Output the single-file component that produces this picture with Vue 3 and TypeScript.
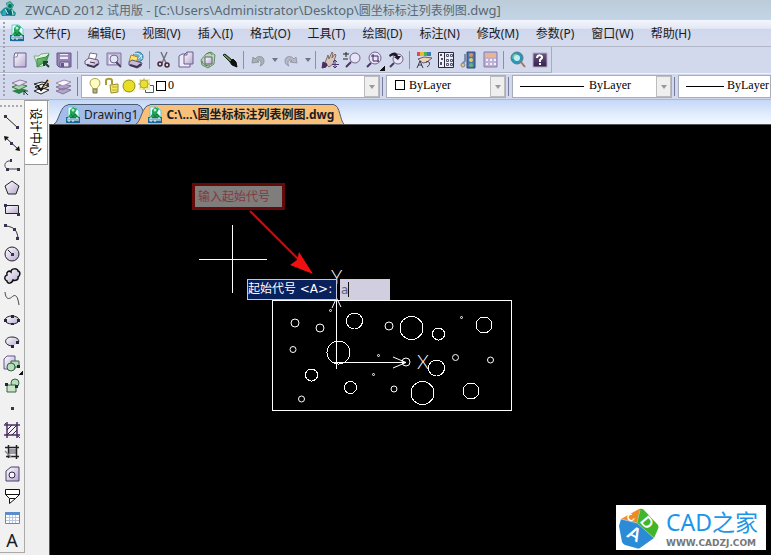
<script setup lang="ts">
import { ref } from 'vue'

interface Tool {
  icon: string
  label: string
  menu?: boolean
  flyout?: boolean
}

interface Hole {
  x: number
  y: number
  r: number
}

const menus: string[] = [
  '文件(F)', '编辑(E)', '视图(V)', '插入(I)', '格式(O)', '工具(T)',
  '绘图(D)', '标注(N)', '修改(M)', '参数(P)', '窗口(W)', '帮助(H)',
]

const toolGroups: Tool[][] = [
  [
    { icon: 'new', label: '新建' },
    { icon: 'open', label: '打开' },
    { icon: 'save', label: '保存' },
  ],
  [
    { icon: 'print', label: '打印' },
    { icon: 'preview', label: '打印预览' },
    { icon: 'publish', label: '发布' },
  ],
  [
    { icon: 'cut', label: '剪切' },
    { icon: 'copy', label: '复制' },
    { icon: 'paste', label: '粘贴' },
    { icon: 'match', label: '特性匹配' },
  ],
  [
    { icon: 'undo', label: '放弃', menu: true },
    { icon: 'redo', label: '重做', menu: true },
  ],
  [
    { icon: 'pan', label: '实时平移' },
    { icon: 'zoomrt', label: '实时缩放' },
    { icon: 'zoomwin', label: '窗口缩放', flyout: true },
    { icon: 'zoomprev', label: '缩放上一个' },
  ],
  [
    { icon: 'props', label: '特性' },
    { icon: 'center', label: '设计中心' },
    { icon: 'palette', label: '工具选项板' },
    { icon: 'calc', label: '计算器' },
  ],
  [
    { icon: 'find', label: '查找' },
    { icon: 'help', label: '帮助' },
  ],
]

const layerTools: Tool[] = [
  { icon: 'layercur', label: '将对象的图层置为当前' },
  { icon: 'layeredit', label: '图层特性管理器' },
  { icon: 'layers', label: '上一个图层' },
]

const drawTools: Tool[] = [
  { icon: 'line', label: '直线' },
  { icon: 'xline', label: '构造线' },
  { icon: 'pline', label: '多段线' },
  { icon: 'polygon', label: '正多边形' },
  { icon: 'rect', label: '矩形' },
  { icon: 'arc', label: '圆弧' },
  { icon: 'circle', label: '圆' },
  { icon: 'cloud', label: '修订云线' },
  { icon: 'spline', label: '样条曲线' },
  { icon: 'ellipse', label: '椭圆' },
  { icon: 'earc', label: '椭圆弧' },
  { icon: 'insert', label: '插入块', flyout: true },
  { icon: 'block', label: '创建块' },
  { icon: 'point', label: '点' },
  { icon: 'hatch', label: '图案填充' },
  { icon: 'boundary', label: '边界' },
  { icon: 'region', label: '面域' },
  { icon: 'wipeout', label: '区域覆盖' },
  { icon: 'table', label: '表格' },
  { icon: 'text', label: '多行文字' },
]

const holes: Hole[] = [
  { x: 295, y: 323, r: 4 }, { x: 320, y: 328, r: 4 }, { x: 330.5, y: 310.5, r: 1 },
  { x: 354.5, y: 321, r: 8 }, { x: 389, y: 326, r: 4 }, { x: 411.5, y: 328, r: 11.5 },
  { x: 438.5, y: 334, r: 6 }, { x: 461.5, y: 317.5, r: 1 }, { x: 484, y: 325, r: 8 },
  { x: 293, y: 349.5, r: 3 }, { x: 338.5, y: 352.5, r: 11.5 }, { x: 378.5, y: 355.5, r: 1 },
  { x: 406, y: 362, r: 4 }, { x: 436.5, y: 368, r: 8 }, { x: 455.5, y: 357.5, r: 3 },
  { x: 490.5, y: 360, r: 3 }, { x: 311.5, y: 375, r: 6 }, { x: 373.5, y: 374.5, r: 1 },
  { x: 350.5, y: 387.5, r: 6 }, { x: 394, y: 389, r: 3 }, { x: 422.5, y: 393, r: 11.5 },
  { x: 471, y: 391, r: 8 }, { x: 301.5, y: 399, r: 3 },
]

const startCode = ref('a')
</script>

<template>
  <div class="app">
    <svg class="sprite" width="0" height="0" aria-hidden="true">
      <defs>
        <linearGradient id="g-lilac" x1="0" y1="0" x2="1" y2="1">
          <stop offset="0" stop-color="#ffffff" />
          <stop offset="1" stop-color="#b6a8cf" />
        </linearGradient>
        <linearGradient id="g-green" x1="0" y1="0" x2="1" y2="1">
          <stop offset="0" stop-color="#8fd08a" />
          <stop offset="1" stop-color="#2e8a45" />
        </linearGradient>
        <linearGradient id="g-purple" x1="0" y1="0" x2="0" y2="1">
          <stop offset="0" stop-color="#6a5784" />
          <stop offset="1" stop-color="#33224a" />
        </linearGradient>
      </defs>
      <symbol id="i-logo" viewBox="0 0 18 18">
        <path d="M6 2l4-2 4 4-2 4 4 4-1 3H2l-2-4 4-4 3-1z" fill="#1c8f86" />
        <path d="M7 2l3-1 3 4-2 3-4-1z" fill="#49c58c" />
        <circle cx="10" cy="5" r="2" fill="#126a6d" />
        <path d="M3 10l4-1 3 6-8-1zM11 9l4 4-3 2z" fill="#2da7c4" />
        <path d="M7 7l2 3 2-2 2 6H6z" fill="#0f6377" />
        <path d="M5 8l3 5M12 9l1 5" stroke="#bdf0d8" />
      </symbol>
      <symbol id="i-dwg" viewBox="0 0 18 18">
        <path d="M4 1h7l4 4v12H4z" fill="#eefcfd" stroke="#68c8d4" />
        <path d="M6 4l3-3 4 2-2 4 4 4H4l2-3z" fill="#23a457" />
        <circle cx="9" cy="4" r="1.500" fill="#b7f1cc" />
        <path d="M7 8l2 3 2-3 2 3" fill="none" stroke="#10753b" />
        <path d="M2 11h14v6H2z" fill="#176b9b" />
        <path d="M4 12v3h2v-3zM8 12v3h2v-3M12 15v-3h2v3" fill="none" stroke="#fff" />
      </symbol>
      <symbol id="i-new" viewBox="0 0 18 18">
        <path d="M4 2h11v14H3V5z" fill="url(#g-lilac)" stroke="#6d5c91" />
        <path d="M3 6h3l1-4" fill="#fff" stroke="#8b7caa" />
      </symbol>
      <symbol id="i-open" viewBox="0 0 18 18">
        <path d="M1 5h5l2-2 8-1-3 12-8 2z" fill="#dff3dd" stroke="#7bae7e" />
        <path d="M4 8l9-2 3-3-3 7-9 6z" fill="url(#g-green)" stroke="#3a8a4c" />
        <path d="M16 16l-5-5m0 4v-4h4" fill="none" stroke="#1e4a2c" stroke-width="2" />
      </symbol>
      <symbol id="i-save" viewBox="0 0 18 18">
        <path d="M2 2h14v14H4l-2-2z" fill="#9384b5" stroke="#66568b" />
        <path d="M5 3h8v5H5z" fill="#eeeaf7" />
        <path d="M5 5h8M5 11h9v5H5z" fill="#e3dded" stroke="#65558a" />
        <path d="M6 12h3v4H6z" fill="#65558a" />
      </symbol>
      <symbol id="i-print" viewBox="0 0 18 18">
        <path d="M7 2l7 1-2 7-7-1z" fill="#fff" stroke="#766d85" />
        <path d="M2 10l4-3 9 2 1 4-5 3-9-3z" fill="url(#g-lilac)" stroke="#66597c" />
        <path d="M4 14l7 2 4-3" fill="none" stroke="#40354e" stroke-width="2" />
        <path d="M7 11l5 1" stroke="#40354e" />
      </symbol>
      <symbol id="i-preview" viewBox="0 0 18 18">
        <path d="M2 2h14v12H2z" fill="#c2bbd6" stroke="#8176a0" />
        <path d="M4 4h7v9H4z" fill="#eee9f5" />
        <circle cx="9" cy="8" r="4" fill="#dfe8f3" stroke="#71668d" />
        <path d="M11 11l5 5" stroke="#4f4068" stroke-width="2" />
      </symbol>
      <symbol id="i-publish" viewBox="0 0 18 18">
        <circle cx="11" cy="6" r="5" fill="#6cb2d8" stroke="#317997" />
        <path d="M7 3c4-2 7 1 8 5M7 8c3 1 5-1 8-4" fill="none" stroke="#e4f4f4" />
        <path d="M4 4l7 2-2 7-7-2z" fill="#ffe36a" stroke="#aa852a" />
        <path d="M2 11l3-2 10 3-1 3-4 2-8-3z" fill="#c6bdd9" stroke="#5d4d72" />
        <path d="M3 14l7 2 4-3" fill="none" stroke="#3e3350" stroke-width="2" />
      </symbol>
      <symbol id="i-cut" viewBox="0 0 18 18">
        <path d="M6 1l5 11M12 1L7 12" fill="none" stroke="#77717f" stroke-width="1.500" />
        <circle cx="5" cy="13" r="2" fill="none" stroke="#492330" stroke-width="1.500" />
        <circle cx="12" cy="14" r="2" fill="none" stroke="#492330" stroke-width="1.500" />
      </symbol>
      <symbol id="i-copy" viewBox="0 0 18 18">
        <path d="M2 5l3-2h8v13H2z" fill="#eeeaf7" stroke="#6d5c91" />
        <path d="M7 4l3-3h6v12H7z" fill="url(#g-lilac)" stroke="#6d5c91" />
        <path d="M7 4h3V1" fill="none" stroke="#6d5c91" />
      </symbol>
      <symbol id="i-paste" viewBox="0 0 18 18">
        <path d="M2 9l5-6 5-2 4 3-1 9-6 4-6-3z" fill="#b7d7b5" stroke="#668b68" />
        <path d="M6 6h7v7H6z" fill="url(#g-lilac)" stroke="#655a76" />
        <path d="M8 3c1-2 4-2 5 1M3 10c1 4 4 5 8 5" fill="none" stroke="#4b7c52" />
      </symbol>
      <symbol id="i-match" viewBox="0 0 18 18">
        <path d="M2 4l2-1 7 6-2 2z" fill="#3f6b3c" stroke="#1d241f" />
        <path d="M9 11l3-3 3 3 1 5-5-2z" fill="#111" stroke="#111" />
        <path d="M3 4l7 6" stroke="#7fb676" />
      </symbol>
      <symbol id="i-undo" viewBox="0 0 18 18">
        <path d="M3 12l1-6 2 2c3-4 9-3 9 2 0 2-1 4-4 5 2-3 1-6-2-6l-1 1 2 1z" fill="#a9b0b6" stroke="#8f979e" />
      </symbol>
      <symbol id="i-redo" viewBox="0 0 18 18">
        <path d="M15 12l-1-6-2 2c-3-4-9-3-9 2 0 2 1 4 4 5-2-3-1-6 2-6l1 1-2 1z" fill="#b4b7c4" stroke="#9699a8" />
      </symbol>
      <symbol id="i-pan" viewBox="0 0 18 18">
        <path d="M4 12l3-8 1 4 3-7 1 1-1 5 3-4 1 1-3 9-4 3z" fill="#d5c5bc" stroke="#806a63" />
        <path d="M2 11l4 2-1 3-4 1z" fill="#49305f" stroke="#49305f" />
        <path d="M14 10v7M11 13.500h7M12 11l2-2 2 2M12 15l2 2 2-2" fill="none" stroke="#4b376e" />
      </symbol>
      <symbol id="i-zoomrt" viewBox="0 0 18 18">
        <circle cx="12" cy="7" r="5" fill="#e6e4f6" stroke="#71668d" />
        <path d="M8 11l-5 5" stroke="#49375e" stroke-width="2" />
        <path d="M3 1v5M0 3h6M0 8h5" stroke="#222" />
      </symbol>
      <symbol id="i-zoomwin" viewBox="0 0 18 18">
        <circle cx="10" cy="7" r="6" fill="#e6e4f6" stroke="#71668d" />
        <path d="M6 12l-4 4" stroke="#49375e" stroke-width="2" />
        <path d="M8 3v7h6M6 5h7v6" fill="none" stroke="#3e275c" />
      </symbol>
      <symbol id="i-zoomprev" viewBox="0 0 18 18">
        <circle cx="11" cy="8" r="5" fill="#e6e4f6" stroke="#71668d" />
        <path d="M7 12l-4 4" stroke="#49375e" stroke-width="2" />
        <path d="M2 4c5-4 8-3 9 1h3l-3 4-4-3h2C7 4 5 4 3 6z" fill="#211729" />
      </symbol>
      <symbol id="i-props" viewBox="0 0 18 18">
        <path d="M2 1h3v4H2z" fill="#d84c58" />
        <path d="M5 1h4v4H5z" fill="#e7ba37" />
        <path d="M9 1h3v4H9z" fill="#50af50" />
        <path d="M12 1h4v4h-4z" fill="#3d77be" />
        <path d="M3 8l6-2 8 1-5 4-4 1z" fill="#ecd4b9" stroke="#655c68" />
        <path d="M11 11c4-2 5 3 1 5M2 17l3-7 3 7M3 14h4" fill="none" stroke="#3c374a" />
      </symbol>
      <symbol id="i-center" viewBox="0 0 18 18">
        <path d="M1.500 1.500h15v15h-15z" fill="#f0eff8" stroke="#2c2836" />
        <path d="M7.500 1v16" stroke="#2c2836" />
        <path d="M3 3h2v2H3zM4 7h2v2H4zM3 11h2v3H3z" fill="#4c5370" />
        <path d="M9.500 3.500h2v2h-2zM13.500 3.500h2v2h-2zM9.500 8.500h2v2h-2zM13.500 8.500h2v2h-2zM9.500 12.500h2v2h-2zM13.500 12.500h2v2h-2z" fill="none" stroke="#4c5370" />
      </symbol>
      <symbol id="i-palette" viewBox="0 0 18 18">
        <path d="M8 1h8v16H8z" fill="#4977a9" stroke="#374d70" />
        <circle cx="12" cy="4" r="2" fill="#e18b65" />
        <circle cx="12" cy="9" r="2" fill="#e3d065" />
        <circle cx="12" cy="14" r="2" fill="#63b57e" />
        <path d="M6 3v7l-3 3" fill="none" stroke="#8190b2" stroke-width="2" />
        <circle cx="4" cy="14" r="2" fill="#f1c46c" stroke="#7e81a4" />
      </symbol>
      <symbol id="i-calc" viewBox="0 0 18 18">
        <path d="M3 1h13v15H3z" fill="#bcb2d6" stroke="#8b7aac" />
        <path d="M4 2h11v4H4z" fill="#e6b595" />
        <path d="M5 8h2v2H5zM9 8h2v2H9zM13 8h2v2h-2zM5 12h2v2H5zM9 12h2v2H9zM13 12h2v2h-2z" fill="#f3effc" />
      </symbol>
      <symbol id="i-find" viewBox="0 0 18 18">
        <circle cx="8" cy="7" r="6" fill="#2b97b6" stroke="#5d788a" />
        <path d="M4 4c3-3 6 0 5 3L6 9 3 7z" fill="#67c8a0" />
        <circle cx="8" cy="7" r="3" fill="#c3ecf6" />
        <path d="M12 11l4 5" stroke="#a27756" stroke-width="2" />
      </symbol>
      <symbol id="i-help" viewBox="0 0 18 18">
        <path d="M2 2h14v14H2z" fill="url(#g-purple)" stroke="#b8a9ca" />
        <path d="M6 7c0-4 6-3 5 0l-2 2v2M9 12v2" fill="none" stroke="#fff" stroke-width="2" />
      </symbol>
      <symbol id="i-layercur" viewBox="0 0 18 18">
        <path d="M1 13l8-3 7 2-8 4z" fill="#268447" />
        <path d="M1 9l8-3 7 2-8 4z" fill="#a8d4ab" stroke="#3e754b" />
        <path d="M1 5l8-3 7 2-8 4z" fill="#e8e1ef" stroke="#8c7da0" />
        <path d="M17 17l-4-4m0 4v-4h4" fill="none" stroke="#163c22" />
      </symbol>
      <symbol id="i-layeredit" viewBox="0 0 18 18">
        <path d="M1 6l8-2 7 2-7 3zM1 13l8-3 7 2-8 4z" fill="#fff" stroke="#252525" />
        <path d="M2 9l7-3 7 2-8 4z" fill="#eee" stroke="#111" />
        <path d="M5 8l3 4 7-10" fill="none" stroke="#111" stroke-width="2" />
        <path d="M10 10l6-8" stroke="#f2b948" />
      </symbol>
      <symbol id="i-layers" viewBox="0 0 18 18">
        <path d="M1 13l8-3 7 2-8 4zM1 9l8-3 7 2-8 4z" fill="#b2a5c6" stroke="#8475a0" />
        <path d="M1 5l8-3 7 2-8 4z" fill="#f8f4fd" stroke="#9a8cac" />
      </symbol>
      <symbol id="i-bulb" viewBox="0 0 18 18">
        <path d="M7 12c0-2-3-3-3-6 0-6 10-6 10 0 0 3-3 4-3 6z" fill="#fffcc0" stroke="#aaa24f" />
        <path d="M7 12h4v4H7z" fill="#bcb775" stroke="#77734f" />
      </symbol>
      <symbol id="i-lock" viewBox="0 0 18 18">
        <path d="M3 8V4c0-3 6-3 6 0v3" fill="none" stroke="#a69d35" stroke-width="2" />
        <path d="M7 8l8-1v8l-7 1z" fill="#f5e960" stroke="#968c29" />
        <path d="M9 10h5M9 13h5" stroke="#b9ab38" />
      </symbol>
      <symbol id="i-sun" viewBox="0 0 18 18">
        <path d="M3 3h12v12H3z" fill="#fcf7a5" />
        <circle cx="9" cy="9" r="6" fill="#e8df22" stroke="#918c2f" />
      </symbol>
      <symbol id="i-sunvp" viewBox="0 0 18 18">
        <path d="M8.500 8.500h8v7h-8z" fill="#fff" stroke="#45606b" />
        <path d="M2 2h11v11H2z" fill="#f3eda0" />
        <path d="M7 1v12M1 7h12M3 3l8 8M11 3l-8 8" stroke="#c3b950" />
        <circle cx="7" cy="7" r="4" fill="#eae032" stroke="#b3a936" />
      </symbol>
      <symbol id="i-line" viewBox="0 0 18 18">
        <path d="M3 4l12 11" stroke="#222" />
        <path d="M1 2h3v3H1zM13 13h3v3h-3z" fill="#38334f" />
      </symbol>
      <symbol id="i-xline" viewBox="0 0 18 18">
        <path d="M2 2l14 13" stroke="#222" />
        <path d="M1 1l5 1-4 4zM17 16l-5-1 4-4z" fill="#111" />
        <path d="M7 7h3v3H7z" fill="#38334f" />
      </symbol>
      <symbol id="i-pline" viewBox="0 0 18 18">
        <path d="M8 4C1 3 0 11 5 12h11" fill="none" stroke="#444" />
        <path d="M7 2h2v3H7zM3 11h3v3H3zM14 11h3v3h-3z" fill="#38334f" />
      </symbol>
      <symbol id="i-polygon" viewBox="0 0 18 18">
        <path d="M9 2l7 5-3 8H5L2 7z" fill="url(#g-lilac)" stroke="#222" />
      </symbol>
      <symbol id="i-rect" viewBox="0 0 18 18">
        <path d="M2.500 4.500h13v8h-13z" fill="url(#g-lilac)" stroke="#222" />
        <path d="M1 3h3v3H1zM14 12h3v3h-3z" fill="#38334f" />
      </symbol>
      <symbol id="i-arc" viewBox="0 0 18 18">
        <path d="M3 3c8 1 11 4 12 12" fill="none" stroke="#333" />
        <path d="M1 1h3v3H1zM10 5h3v3h-3zM13 14h3v3h-3z" fill="#38334f" />
      </symbol>
      <symbol id="i-circle" viewBox="0 0 18 18">
        <circle cx="9" cy="9" r="7" fill="url(#g-lilac)" stroke="#222" />
        <path d="M5 5l4 4" stroke="#222" />
        <path d="M8 8h3v3H8z" fill="#38334f" />
      </symbol>
      <symbol id="i-cloud" viewBox="0 0 18 18">
        <path d="M4 8C3 5 6 3 8 5c0-4 7-4 7-1 3 1 2 5 0 6 1 3-3 4-5 3-1 4-6 4-6 1-3-1-3-5 0-6z" fill="url(#g-lilac)" stroke="#111" stroke-width="1.500" />
      </symbol>
      <symbol id="i-spline" viewBox="0 0 18 18">
        <path d="M2 3c1 10 6 6 8 4 4-2 5 3 6 9" fill="none" stroke="#444" />
      </symbol>
      <symbol id="i-ellipse" viewBox="0 0 18 18">
        <ellipse cx="9" cy="9" rx="7" ry="4" fill="url(#g-lilac)" stroke="#222" />
        <path d="M1 8h3v3H1zM14 8h3v3h-3zM8 4h3v3H8zM8 12h3v2H8z" fill="#272145" />
      </symbol>
      <symbol id="i-earc" viewBox="0 0 18 18">
        <path d="M9 13C0 12 1 4 9 4c6 0 8 4 6 6" fill="url(#g-lilac)" stroke="#222" />
        <path d="M13 8h3v3h-3zM8 12h3v3H8z" fill="#272145" />
      </symbol>
      <symbol id="i-insert" viewBox="0 0 18 18">
        <path d="M4 1h8v13H1V4z" fill="url(#g-lilac)" stroke="#65548a" />
        <path d="M8 6h8v6H8z" fill="#b7ddb9" stroke="#346249" />
        <circle cx="8" cy="12" r="4" fill="#b7ddb9" stroke="#346249" />
        <path d="M14 10h3v3h-3z" fill="#272145" />
      </symbol>
      <symbol id="i-block" viewBox="0 0 18 18">
        <circle cx="12" cy="6" r="4" fill="#b7ddb9" stroke="#346249" />
        <path d="M4 8h9v7H4z" fill="#c8e5c6" stroke="#346249" />
        <path d="M2 6h3v3H2zM12 8h3v3h-3z" fill="#272145" />
      </symbol>
      <symbol id="i-point" viewBox="0 0 18 18">
        <path d="M8 8h3v3H8z" fill="#38334f" />
      </symbol>
      <symbol id="i-hatch" viewBox="0 0 18 18">
        <path d="M4 4h10v10H4z" fill="#f4f1f7" />
        <path d="M4 1v16M14 1v16M1 4h16M1 14h16" stroke="#4a2f66" stroke-width="1.500" />
        <path d="M4 9l5-5M4 14L14 4M9 14l5-5" stroke="#332640" />
        <path d="M2 2l2 2M14 14l3 3" stroke="#4a2f66" />
      </symbol>
      <symbol id="i-boundary" viewBox="0 0 18 18">
        <path d="M6 6h7v5H6z" fill="#9d9aa6" />
        <path d="M5.500 2v13M13.500 2v14M2 4.500h14M3 13.500h13" fill="none" stroke="#222" stroke-width="1.500" />
        <path d="M2 8l6 6" fill="none" stroke="#8b8791" stroke-width="1.500" />
      </symbol>
      <symbol id="i-region" viewBox="0 0 18 18">
        <path d="M3 16V6l5-4h8v14z" fill="url(#g-lilac)" stroke="#4d3e70" />
        <circle cx="9" cy="10" r="3" fill="#f7f4fc" stroke="#30264a" />
      </symbol>
      <symbol id="i-wipeout" viewBox="0 0 18 18">
        <path d="M2.500 2.500h14v5h-14zM2.500 7.500l4 4h6l4-4M6.500 11.500v5l6-5" fill="#fff" stroke="#111" />
      </symbol>
      <symbol id="i-table" viewBox="0 0 18 18">
        <path d="M2.500 3.500h14v11h-14z" fill="#fff" stroke="#7183a6" />
        <path d="M2 3h15v3H2z" fill="#5c8ccb" />
        <path d="M3 8.500h13M3 11.500h13M6.500 6v8M9.500 6v8M12.500 6v8" stroke="#b9c8df" />
      </symbol>
      <symbol id="i-arrow" viewBox="0 0 8 6">
        <path d="M1 1h6L4 5z" fill="currentColor" />
      </symbol>
    </svg>

    <header class="title">
      <svg class="icon"><use href="#i-logo" /></svg>
      <h1>ZWCAD 2012 <span>试用版</span> - [C:\Users\Administrator\Desktop\<span>圆坐标标注列表例图</span>.dwg]</h1>
    </header>

    <div class="bars">
      <nav class="menubar" aria-label="菜单">
        <svg class="icon"><use href="#i-dwg" /></svg>
        <button v-for="m in menus" :key="m" type="button">{{ m }}</button>
      </nav>

      <div class="toolbar" role="toolbar" aria-label="标准">
        <div v-for="(group, g) in toolGroups" :key="g" class="group">
          <template v-for="t in group" :key="t.icon">
            <button type="button" class="tool" :class="{ flyout: t.flyout }" :aria-label="t.label">
              <svg class="icon"><use :href="'#i-' + t.icon" /></svg>
            </button>
            <button v-if="t.menu" type="button" class="drop" :aria-label="t.label + '列表'">
              <svg class="tri"><use href="#i-arrow" /></svg>
            </button>
          </template>
        </div>
      </div>

      <div class="propbar" role="toolbar" aria-label="图层与特性">
        <div class="group layer-tools">
          <button v-for="t in layerTools" :key="t.icon" type="button" class="tool" :aria-label="t.label">
            <svg class="icon"><use :href="'#i-' + t.icon" /></svg>
          </button>
        </div>
        <div class="combo layer">
          <span class="lead">
            <svg class="icon"><use href="#i-bulb" /></svg>
            <svg class="icon"><use href="#i-lock" /></svg>
            <svg class="icon"><use href="#i-sun" /></svg>
            <svg class="icon"><use href="#i-sunvp" /></svg>
            <i class="swatch"></i>
          </span>
          <select aria-label="图层"><option>0</option></select>
          <span class="open"><svg class="tri"><use href="#i-arrow" /></svg></span>
        </div>
        <div class="combo color">
          <span class="lead"><i class="swatch"></i></span>
          <select aria-label="颜色"><option>ByLayer</option></select>
          <span class="open"><svg class="tri"><use href="#i-arrow" /></svg></span>
        </div>
        <div class="combo linetype">
          <span class="lead"><i class="stroke"></i></span>
          <select aria-label="线型"><option>ByLayer</option></select>
          <span class="open"><svg class="tri"><use href="#i-arrow" /></svg></span>
        </div>
        <div class="combo weight">
          <span class="lead"><i class="stroke"></i></span>
          <select aria-label="线宽"><option>ByLayer</option></select>
        </div>
      </div>
    </div>

    <div class="work">
      <aside class="draw" aria-label="绘图">
        <button
          v-for="t in drawTools" :key="t.icon" type="button"
          class="tool" :class="{ flyout: t.flyout }" :aria-label="t.label"
        >
          <span v-if="t.icon === 'text'" class="letter">A</span>
          <svg v-else class="icon"><use :href="'#i-' + t.icon" /></svg>
        </button>
      </aside>
      <aside class="dock">
        <button type="button" class="dock-tab">设计中心</button>
      </aside>

      <main class="doc">
        <div class="tabs" role="tablist">
          <button type="button" role="tab" class="tab" aria-selected="false">
            <svg class="edge" viewBox="0 0 14 20"><path d="M0 20C5 18 6 1 14 1V20z" class="fill" /><path d="M0 20C5 18 6 1 14 1" class="rim" /></svg>
            <span class="face"><svg class="icon"><use href="#i-dwg" /></svg>Drawing1</span>
            <svg class="edge end" viewBox="0 0 10 20"><path d="M10 20C6 17 6 1 0 1V20z" class="fill" /><path d="M10 20C6 17 6 1 0 1" class="rim" /></svg>
          </button>
          <button type="button" role="tab" class="tab active" aria-selected="true">
            <svg class="edge" viewBox="0 0 14 20"><path d="M0 20C5 18 6 1 14 1V20z" class="fill" /><path d="M0 20C5 18 6 1 14 1" class="rim" /></svg>
            <span class="face"><svg class="icon"><use href="#i-dwg" /></svg>C:\...\圆坐标标注列表例图.dwg</span>
            <svg class="edge end" viewBox="0 0 10 20"><path d="M10 20C6 17 6 1 0 1V20z" class="fill" /><path d="M10 20C6 17 6 1 0 1" class="rim" /></svg>
          </button>
        </div>

        <div class="canvas">
          <svg class="drawing" viewBox="50 125 720 430" width="720" height="430">
            <g class="crisp">
              <path d="M199 259.500h68M232.500 225v68" />
              <path d="M272.500 300.500h239v110h-239z" />
              <path d="M336.500 299v70M334 362.500h72" />
            </g>
            <path d="M332 308l4.500-10 4.500 9M393 357l13 5.500-13 5.500" />
            <circle
              v-for="(h, i) in holes" :key="i" :cx="h.x" :cy="h.y" :r="h.r"
              :class="{ crisp: h.r > 5 }"
            />
            <text x="417" y="369">X</text>
            <text x="331" y="284">Y</text>
            <path class="leader" d="M250 211l48 48" />
            <path class="head" d="M313 274l-23-9 7-5 2-8z" />
          </svg>
          <div class="callout">输入起始代号</div>
          <div class="prompt">
            <label for="start-code">起始代号 &lt;A&gt;:</label>
            <span class="entry"><input id="start-code" v-model="startCode" type="text" /><i class="caret"></i></span>
          </div>
          <a class="brand" href="#">
            <svg class="cube" viewBox="0 0 42 42">
              <path d="M3 12L21 2q2-1 3 1l-4 14z" fill="#f08a28" />
              <path d="M22 2q2-1 4 1l14 15q1 2 0 4l-4 9L18 17z" fill="#42b52b" />
              <path d="M3 12l16 4 17 15-14 10q-2 1-4 0L7 38q-2-1-3-3L1 19z" fill="#2b8bd6" />
              <path d="M22 3l-3 13L3 12M19 16l17 15" fill="none" stroke="#fff" opacity=".4" />
              <text x="10" y="33" font-size="18" transform="rotate(28 16 27)">A</text>
              <text x="23" y="21" font-size="15" transform="rotate(50 29 16)">D</text>
              <text x="9" y="14" font-size="10" transform="rotate(-28 13 10)">C</text>
            </svg>
            <span class="words">
              <strong>CAD之家</strong>
              <small>WWW.CADZJ.COM</small>
            </span>
          </a>
        </div>
      </main>
    </div>
  </div>
</template>

<style>
body {
  background: #efefef;
}
</style>

<style scoped>
.app {
  min-height: 100vh;
  display: flex;
  flex-direction: column;
  overflow: hidden;
  font: 12px/16px "Noto Sans", "Noto Sans CJK SC", sans-serif;
  color: #1a1c24;
}
button,
select,
input {
  font: inherit;
  color: inherit;
  margin: 0;
  padding: 0;
  border: 0;
  background: none;
}
.sprite {
  display: block;
}
.icon {
  width: 18px;
  height: 18px;
  flex: none;
}
.tri {
  width: 8px;
  height: 6px;
  flex: none;
}
.title {
  display: flex;
  align-items: center;
  gap: 7px;
  height: 20px;
  background: linear-gradient(#bccbd8, #c3d5e6);
}
.title h1 {
  margin: 0;
  font-size: 13px;
  font-weight: 400;
  line-height: 18px;
  color: #5b6875;
  white-space: nowrap;
}
.title h1 span {
  font-size: 12px;
}
.bars {
  position: relative;
  background: #d3d9ec;
}
.bars::before {
  content: "";
  position: absolute;
  left: 3px;
  top: 2px;
  bottom: 2px;
  width: 2px;
  background: repeating-linear-gradient(#9da3b5 0 2px, transparent 2px 4px);
}
.menubar {
  display: flex;
  align-items: center;
  height: 26px;
  gap: 17px;
  padding-left: 8px;
  background: linear-gradient(#f3f6fc, #e3e8f5 32%, #d0d7ec 36%, #d6dcef);
  border-bottom: 1px solid #b3b7c5;
}
.menubar .icon {
  margin-right: -10px;
}
.menubar button {
  padding-top: 1px;
  white-space: nowrap;
}
.toolbar {
  display: flex;
  align-items: center;
  width: fit-content;
  height: 25px;
  padding-left: 9px;
  border-right: 1px solid #a8adbd;
  border-bottom: 1px solid #b3b7c5;
}
.group {
  display: flex;
  align-items: center;
}
.group + .group {
  padding-left: 6px;
  background: linear-gradient(#8b90a5, #8b90a5) 2px 50% / 1px 18px no-repeat;
}
.tool {
  display: flex;
  align-items: center;
  justify-content: center;
  width: 22px;
  height: 22px;
  flex: none;
}
.flyout {
  background: linear-gradient(135deg, transparent 50%, #111 50%) 100% 100% / 5px 5px no-repeat;
}
.drop {
  display: flex;
  align-items: center;
  justify-content: center;
  width: 11px;
  height: 22px;
  color: #6f7386;
}
.propbar {
  display: flex;
  align-items: center;
  gap: 6px;
  height: 27px;
  padding-left: 9px;
  border-top: 1px solid #eef1fa;
  border-bottom: 1px solid #b3b7c5;
  box-sizing: border-box;
}
.combo {
  position: relative;
  display: grid;
  grid-template-columns: minmax(0, 1fr);
  align-items: center;
  height: 23px;
  box-sizing: border-box;
  border: 1px solid #a9adba;
  background: #fff;
  font: 12px/16px "Liberation Serif", serif;
  color: #000;
}
.combo::before {
  content: "";
  position: absolute;
  left: -5px;
  top: 1px;
  bottom: 1px;
  width: 1px;
  background: #767da0;
}
.combo > * {
  grid-area: 1 / 1;
}
.combo select {
  appearance: none;
  width: 100%;
  height: 21px;
  padding-bottom: 4px;
}
.combo .lead {
  display: flex;
  align-items: center;
  pointer-events: none;
}
.combo .open {
  justify-self: end;
  display: flex;
  align-items: center;
  justify-content: center;
  width: 15px;
  height: 21px;
  box-sizing: border-box;
  border: 1px solid #bdbdbd;
  background: #efefef;
  color: #9a9a9a;
  pointer-events: none;
}
.swatch {
  width: 10px;
  height: 10px;
  box-sizing: border-box;
  border: 1px solid #000;
}
.stroke {
  height: 1px;
  background: #000;
}
.layer {
  flex: 0 1 299px;
}
.layer .lead {
  padding-left: 4px;
  padding-bottom: 2px;
}
.layer .lead .icon {
  margin-right: -1px;
}
.layer .swatch {
  margin-left: 2px;
}
.layer select {
  padding-left: 86px;
}
.color {
  flex: 0 1 120px;
}
.color .lead {
  padding-left: 8px;
  padding-bottom: 4px;
}
.color select {
  padding-left: 22px;
}
.linetype {
  flex: 0 1 160px;
}
.linetype .lead,
.weight .lead {
  padding-left: 7px;
}
.linetype .stroke {
  width: 64px;
}
.linetype select {
  padding-left: 76px;
}
.weight {
  flex: 1 0 92px;
}
.weight .stroke {
  width: 38px;
}
.weight select {
  padding-left: 48px;
}
.work {
  flex: 1;
  display: flex;
  align-items: stretch;
  background: #efefef;
}
.draw {
  align-self: flex-start;
  width: 25px;
  box-sizing: border-box;
  padding: 11px 0 1px 1px;
  border-right: 1px solid #aaa;
  border-bottom: 1px solid #aaa;
  background: repeating-linear-gradient(90deg, #a9a9b0 0 2px, transparent 2px 4px) 0 5px / 100% 2px no-repeat #f1f1f1;
}
.letter {
  font: 18px/20px "Noto Sans", sans-serif;
}
.dock {
  width: 24px;
  border-top: 1px solid #999;
}
.dock-tab {
  width: 23px;
  height: 64px;
  box-sizing: border-box;
  border: 1px solid #999;
  border-left: 0;
  border-top: 0;
  background: #fff;
  font: 12px/20px "Noto Sans CJK SC", sans-serif;
  color: #000;
  writing-mode: vertical-rl;
  text-orientation: sideways;
}
.doc {
  flex: 1;
  min-width: 0;
  display: flex;
  flex-direction: column;
}
.tabs {
  display: flex;
  align-items: flex-end;
  height: 24px;
  padding-left: 5px;
  background: linear-gradient(#c5d8f7, #f0f6ff 90%);
}
.tab {
  --face: #a4bcea;
  display: flex;
  height: 20px;
  white-space: nowrap;
}
.edge {
  width: 14px;
  height: 20px;
}
.edge.end {
  width: 10px;
}
.edge .fill {
  fill: var(--face);
}
.edge .rim {
  fill: none;
  stroke: #4d5b70;
}
.face {
  display: flex;
  align-items: center;
  height: 20px;
  box-sizing: border-box;
  border-top: 1px solid #4d5b70;
  background: var(--face);
}
.tab .icon {
  margin: 0 2px 0 -4px;
}
.active {
  --face: #f8c078;
  margin-left: -12px;
  font-weight: 700;
  z-index: 1;
}
.canvas {
  position: relative;
  flex: 1;
  min-height: 420px;
  overflow: hidden;
  background: #000;
  border-left: 1px solid #555;
  border-top: 1px solid #555;
}
.drawing {
  position: absolute;
  left: 0;
  top: 0;
  fill: none;
  stroke: #fff;
}
.drawing .crisp {
  shape-rendering: crispEdges;
}
.drawing text {
  font: 300 19px "Lato", sans-serif;
  fill: #fff;
  stroke: none;
}
.drawing .leader {
  stroke: #b81414;
  stroke-width: 2;
}
.drawing .head {
  fill: #f01010;
  stroke: none;
}
.callout {
  position: absolute;
  left: 142px;
  top: 58px;
  padding: 3px 12px 2px 3px;
  border: 3px solid #650a0a;
  background: #807d7d;
  color: #83393f;
  line-height: 16px;
}
.prompt {
  position: absolute;
  left: 197px;
  top: 154px;
  display: flex;
  gap: 3px;
  color: #fff;
  font-family: "DejaVu Sans", "Noto Sans CJK SC", sans-serif;
}
.prompt label {
  width: 90px;
  height: 21px;
  box-sizing: border-box;
  border: 1px solid #c3c6dc;
  background: #08205c;
  line-height: 19px;
  white-space: nowrap;
}
.entry {
  position: relative;
}
.entry input {
  width: 50px;
  height: 21px;
  box-sizing: border-box;
  padding-left: 1px;
  background: #d1cee0;
  color: #596087;
}
.caret {
  position: absolute;
  left: 8px;
  top: 3px;
  width: 1px;
  height: 15px;
  background: #111;
}
.brand {
  position: absolute;
  right: 5px;
  bottom: 5px;
  display: flex;
  align-items: center;
  width: 150px;
  height: 45px;
  background: #fff;
  text-decoration: none;
}
.cube {
  width: 42px;
  height: 42px;
  margin: 0 6px 0 2px;
  flex: none;
}
.cube text {
  font-family: "Lato", sans-serif;
  font-weight: 700;
  fill: #fff;
}
.words {
  display: flex;
  flex-direction: column;
  align-items: flex-start;
}
.words strong {
  font: 400 23px/31px "Noto Sans", "Noto Sans CJK SC", sans-serif;
  color: #1d96e8;
  white-space: nowrap;
}
.words small {
  font: 700 9px/11px "DejaVu Sans", sans-serif;
  color: #777;
}
</style>
